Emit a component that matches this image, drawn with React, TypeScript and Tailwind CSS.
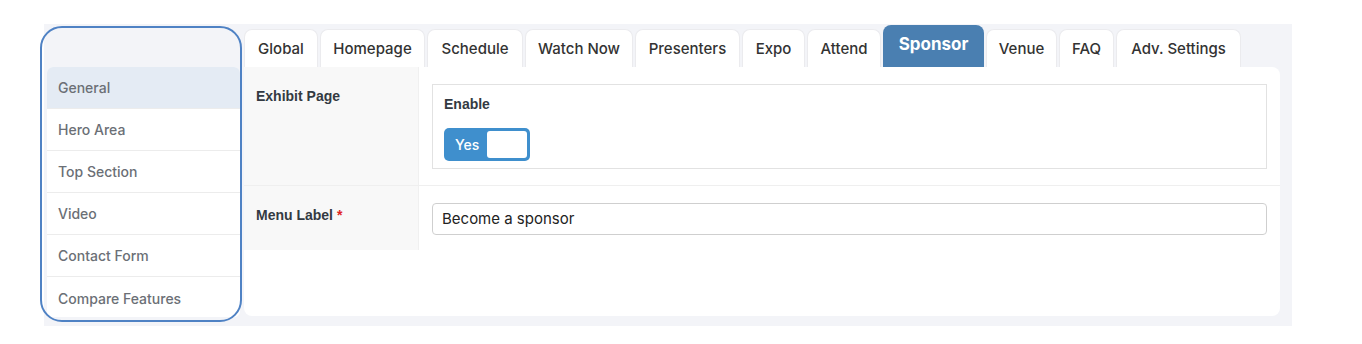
const tabs = [
  { label: "Global", w: "w-[74px]" },
  { label: "Homepage", w: "w-[105px]" },
  { label: "Schedule", w: "w-[96px]" },
  { label: "Watch Now", w: "w-[108px]" },
  { label: "Presenters", w: "w-[105px]" },
  { label: "Expo", w: "w-[63px]" },
  { label: "Attend", w: "w-[74px]" },
  { label: "Sponsor", w: "w-[101px]", active: true },
  { label: "Venue", w: "w-[71px]" },
  { label: "FAQ", w: "w-[55px]" },
  { label: "Adv. Settings", w: "w-[125px]" },
];

const sections = ["General", "Hero Area", "Top Section", "Video", "Contact Form", "Compare Features"];

export default function App() {
  return (
    <div className="relative w-[1362px] h-[344px] bg-white pt-[24px] pl-[44px]" style={{ fontFamily: "Inter, 'Liberation Sans', sans-serif" }}>
      <div className="flex w-[1248px] h-[302px] bg-[#f3f4f8]">
        {/* Section sidebar */}
        <div className="ml-[3px] mt-[43px] w-[193px] h-[250px] bg-white rounded-md overflow-hidden flex flex-col">
          {sections.map((s, i) => (
            <div
              key={s}
              className={`h-[42px] shrink-0 flex items-center pl-[11px] text-[14px] font-medium text-[#6b6f76] ${
                i === 0 ? "bg-[#e4ebf4]" : "bg-white"
              } ${i < sections.length - 1 ? "border-b border-[#ececec]" : ""}`}
            >
              {s}
            </div>
          ))}
        </div>

        {/* Main panel */}
        <div className="ml-[4px] w-[1036px] flex flex-col">
          <div className="h-[43px] flex items-end gap-[2px]">
            {tabs.map((t) =>
              t.active ? (
                <div
                  key={t.label}
                  className={`${t.w} h-[42px] rounded-t-lg bg-[#4a7fb1] text-white text-[17px] font-bold flex items-center justify-center pb-[3px]`}
                >
                  {t.label}
                </div>
              ) : (
                <div
                  key={t.label}
                  className={`${t.w} h-[38px] rounded-t-lg bg-white border border-b-0 border-[#ebebee] text-[15px] font-medium text-[#333] flex items-center justify-center pt-[2px]`}
                >
                  {t.label}
                </div>
              )
            )}
          </div>

          <div className="h-[249px] bg-white rounded-tr-lg rounded-b-lg overflow-hidden">
            {/* Exhibit Page row */}
            <div className="flex h-[119px] border-b border-[#efefef]">
              <div className="w-[175px] shrink-0 bg-[#f8f8f8] border-r border-[#f0f0f0] pl-[12px] pt-[19px] text-[14px] font-bold text-[#333a42]" style={{ fontFamily: "'Liberation Sans', Arial, sans-serif" }}>
                Exhibit Page
              </div>
              <div className="flex-1 pt-[17px] px-[13px]">
                <div className="h-[85px] border border-[#e2e2e2] pl-[11px] pt-[9px]">
                  <div className="text-[14px] font-bold text-[#333a42]" style={{ fontFamily: "'Liberation Sans', Arial, sans-serif" }}>Enable</div>
                  <div className="mt-[13px] w-[86px] h-[33px] rounded-[5px] bg-[#3f8fcd] flex items-center pl-[11px] pr-[3px]">
                    <span className="text-[14px] font-medium text-white">Yes</span>
                    <div className="ml-auto w-[40px] h-[27px] rounded-[3px] bg-white" />
                  </div>
                </div>
              </div>
            </div>

            {/* Menu Label row */}
            <div className="flex h-[64px]">
              <div className="w-[175px] shrink-0 bg-[#f8f8f8] border-r border-[#f0f0f0] pl-[12px] pt-[19px] text-[14px] font-bold text-[#333a42]" style={{ fontFamily: "'Liberation Sans', Arial, sans-serif" }}>
                Menu Label <span className="text-[#e02424]">*</span>
              </div>
              <div className="flex-1 pt-[17px] px-[13px]">
                <div className="h-[32px] border border-[#cfcfcf] rounded-[4px] flex items-center pl-[9px] text-[15px] text-[#222]">
                  Become a sponsor
                </div>
              </div>
            </div>
          </div>
        </div>
      </div>

      {/* Annotation outline around the sidebar */}
      <div className="absolute left-[40px] top-[26px] w-[202px] h-[296px] rounded-[22px] border-2 border-[#4f82c4] pointer-events-none" />
    </div>
  );
}
